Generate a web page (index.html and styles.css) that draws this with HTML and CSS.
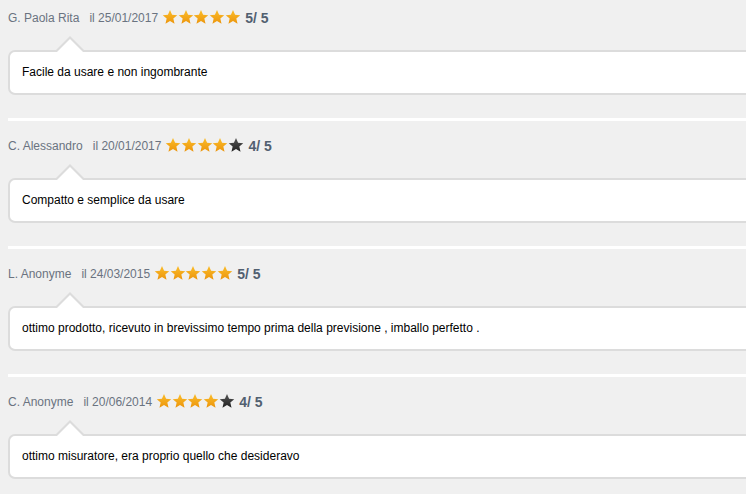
FILE: index.html
```html
<!DOCTYPE html>
<html lang="it">
<head>
<meta charset="utf-8">
<title>Recensioni</title>
<link rel="stylesheet" href="styles.css">
</head>
<body>
<svg width="0" height="0" class="defs" aria-hidden="true">
  <defs>
    <linearGradient id="gold" x1="0" y1="0" x2="0" y2="1">
      <stop offset="0" stop-color="#fbbd2a"/>
      <stop offset="1" stop-color="#ec950c"/>
    </linearGradient>
    <linearGradient id="dark" x1="0" y1="0" x2="0" y2="1">
      <stop offset="0" stop-color="#555"/>
      <stop offset="1" stop-color="#222"/>
    </linearGradient>
    <symbol id="star" viewBox="0 0 24 24">
      <path d="M12 1.5l3.1 7.2 7.8.6-5.9 5.1 1.8 7.6L12 17.9 5.2 22l1.8-7.6-5.9-5.1 7.8-.6z"/>
    </symbol>
  </defs>
</svg>

<div class="review">
  <div class="head">
    <span class="name">G. Paola Rita</span>
    <span class="date">il 25/01/2017</span>
    <span class="stars">
      <svg class="star on"><use href="#star"/></svg><svg class="star on"><use href="#star"/></svg><svg class="star on"><use href="#star"/></svg><svg class="star on"><use href="#star"/></svg><svg class="star on"><use href="#star"/></svg>
    </span>
    <span class="score">5/ 5</span>
  </div>
  <div class="box">Facile da usare e non ingombrante</div>
</div>
<div class="sep"></div>

<div class="review">
  <div class="head">
    <span class="name">C. Alessandro</span>
    <span class="date">il 20/01/2017</span>
    <span class="stars">
      <svg class="star on"><use href="#star"/></svg><svg class="star on"><use href="#star"/></svg><svg class="star on"><use href="#star"/></svg><svg class="star on"><use href="#star"/></svg><svg class="star off"><use href="#star"/></svg>
    </span>
    <span class="score">4/ 5</span>
  </div>
  <div class="box">Compatto e semplice da usare</div>
</div>
<div class="sep"></div>

<div class="review">
  <div class="head">
    <span class="name">L. Anonyme</span>
    <span class="date">il 24/03/2015</span>
    <span class="stars">
      <svg class="star on"><use href="#star"/></svg><svg class="star on"><use href="#star"/></svg><svg class="star on"><use href="#star"/></svg><svg class="star on"><use href="#star"/></svg><svg class="star on"><use href="#star"/></svg>
    </span>
    <span class="score">5/ 5</span>
  </div>
  <div class="box">ottimo prodotto, ricevuto in brevissimo tempo prima della previsione , imballo perfetto .</div>
</div>
<div class="sep"></div>

<div class="review">
  <div class="head">
    <span class="name">C. Anonyme</span>
    <span class="date">il 20/06/2014</span>
    <span class="stars">
      <svg class="star on"><use href="#star"/></svg><svg class="star on"><use href="#star"/></svg><svg class="star on"><use href="#star"/></svg><svg class="star on"><use href="#star"/></svg><svg class="star off"><use href="#star"/></svg>
    </span>
    <span class="score">4/ 5</span>
  </div>
  <div class="box">ottimo misuratore, era proprio quello che desideravo</div>
</div>
<div class="sep"></div>
</body>
</html>
```

FILE: styles.css
```css
html, body {
  margin: 0;
  padding: 0;
  background: #f0f0f0;
  overflow: hidden;
  font-family: "Liberation Sans", Arial, sans-serif;
  font-size: 12px;
}

.defs {
  position: absolute;
  width: 0;
  height: 0;
}

.review {
  padding: 11px 0 23px 8px;
  margin-right: -20px;
}

.head {
  display: flex;
  align-items: center;
  height: 14px;
  line-height: 14px;
  color: #6a7380;
}

.name {
  margin-right: 10px;
}

.date {
  margin-right: 4px;
}

.stars {
  display: flex;
  align-items: center;
  margin-top: -3px;
}

.star {
  width: 16px;
  height: 16px;
  margin-right: -0.4px;
}

.star.on {
  fill: url(#gold);
}

.star.off {
  fill: url(#dark);
}

.score {
  margin-left: 5px;
  font-size: 14px;
  font-weight: bold;
  color: #526070;
}

.box {
  position: relative;
  margin-top: 25px;
  background: #fff;
  border: 2px solid #dcdcdc;
  border-radius: 7px;
  padding: 12px 12px;
  line-height: 17px;
  color: #000;
}

.box::before,
.box::after {
  content: "";
  position: absolute;
  left: 46px;
  width: 0;
  height: 0;
  border-left: 14px solid transparent;
  border-right: 14px solid transparent;
}

.box::before {
  top: -16px;
  border-bottom: 14px solid #dcdcdc;
}

.box::after {
  top: -13px;
  border-bottom: 14px solid #fff;
}

.sep {
  height: 3px;
  margin: 0 0 7px 8px;
  background: #fff;
}
```
